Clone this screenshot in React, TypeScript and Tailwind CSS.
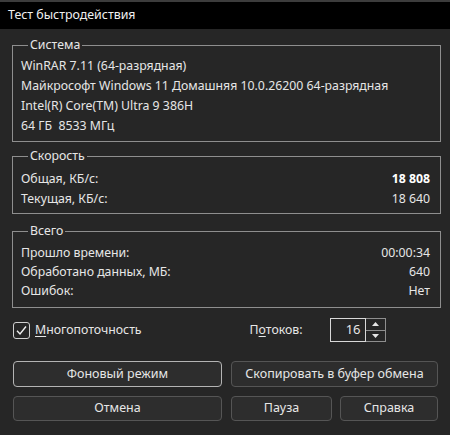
import React from "react";

const font = { fontFamily: '"Noto Sans", "Open Sans", sans-serif' };

function Group({ title, children, className }: { title: string; children: React.ReactNode; className?: string }) {
  return (
    <fieldset className={`mx-[12px] w-[429px] border border-[#8e8e8e] pl-[8px] pr-[10px] ${className ?? ""}`}>
      <legend className="ml-[7px] px-[2px] text-[12.3px] leading-[16px] text-[#e6e6e6]">{title}</legend>
      {children}
    </fieldset>
  );
}

function Row({ label, value, bold, h = "h-[20px]" }: { label: string; value?: string; bold?: boolean; h?: string }) {
  return (
    <div className={`flex ${h} items-center justify-between whitespace-pre text-[12.3px] text-[#e6e6e6]`}>
      <span>{label}</span>
      {value && <span className={bold ? "font-bold text-white" : ""}>{value}</span>}
    </div>
  );
}

function Button({ children, primary, className }: { children: React.ReactNode; primary?: boolean; className?: string }) {
  return (
    <button
      className={`flex h-[25px] items-center justify-center rounded-[4px] border bg-[#2d2d2d] text-[12.5px] text-[#e6e6e6] ${
        primary ? "border-[#b4b4b4]" : "border-[#555555]"
      } ${className ?? ""}`}
    >
      {children}
    </button>
  );
}

export default function App() {
  return (
    <div className="flex h-[435px] w-[450px] flex-col bg-[#262626]" style={font}>
      <div className="h-[2px] bg-[#3c3c3c]" />
      <div className="flex h-[27px] items-center bg-black pl-[8px] text-[12.4px] text-[#f0f0f0]">Тест быстродействия</div>

      <Group title="Система" className="mt-[8px] pt-[3px] pb-[5px]">
        <Row label="WinRAR 7.11 (64-разрядная)" />
        <Row label="Майкрософт Windows 11 Домашняя 10.0.26200 64-разрядная" />
        <Row label="Intel(R) Core(TM) Ultra 9 386H" />
        <Row label="64 ГБ  8533 МГц" />
      </Group>

      <Group title="Скорость" className="mt-[6px] pt-[5px] pb-[4px]">
        <Row label="Общая, КБ/с:" value="18 808" bold />
        <Row label="Текущая, КБ/с:" value="18 640" />
      </Group>

      <Group title="Всего" className="mt-[9px] pt-[5px] pb-[6px]">
        <Row h="h-[19px]" label="Прошло времени:" value="00:00:34" />
        <Row h="h-[19px]" label="Обработано данных, МБ:" value="640" />
        <Row h="h-[19px]" label="Ошибок:" value="Нет" />
      </Group>

      <div className="mt-[10px] flex h-[24px] items-center pl-[13px] text-[12.3px] text-[#e6e6e6]">
        <div className="flex h-[17px] w-[17px] items-center justify-center rounded-[3px] border border-[#d0d0d0]">
          <svg width="13" height="13" viewBox="0 0 13 13" fill="none">
            <path d="M2 6.8 L5 10 L11 2.5" stroke="#f0f0f0" strokeWidth="1.4" />
          </svg>
        </div>
        <span className="ml-[5px]">
          <span className="underline underline-offset-2">М</span>ногопоточность
        </span>
        <span className="ml-[108px]">
          П<span className="underline underline-offset-2">о</span>токов:
        </span>
        <div className="ml-[27px] flex h-[24px] items-stretch">
          <div className="flex w-[36px] items-center justify-end border border-[#d8d8d8] pr-[4px] text-[13px]">16</div>
          <div className="flex w-[20px] flex-col border border-l-0 border-[#8e8e8e]">
            <div className="flex flex-1 items-center justify-center border-b border-[#8e8e8e]">
              <svg width="7" height="4" viewBox="0 0 7 4"><path d="M0 4 L3.5 0 L7 4Z" fill="#e6e6e6" /></svg>
            </div>
            <div className="flex flex-1 items-center justify-center">
              <svg width="7" height="4" viewBox="0 0 7 4"><path d="M0 0 L3.5 4 L7 0Z" fill="#e6e6e6" /></svg>
            </div>
          </div>
        </div>
      </div>

      <div className="mt-[19px] flex gap-[9px] pl-[13px]">
        <Button primary className="h-[26px] w-[209px]">Фоновый режим</Button>
        <Button className="h-[26px] w-[207px]">Скопировать в буфер обмена</Button>
      </div>
      <div className="mt-[9px] flex gap-[9px] pl-[13px]">
        <Button className="w-[209px]">Отмена</Button>
        <Button className="w-[101px]">Пауза</Button>
        <Button className="ml-[-1px] w-[98px]">Справка</Button>
      </div>
    </div>
  );
}
